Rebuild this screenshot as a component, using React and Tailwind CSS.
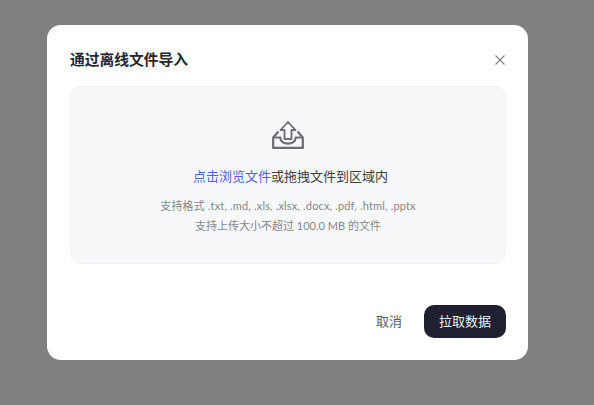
import React from "react";

const UploadIcon = () => (
  <svg width="34" height="30" viewBox="0 0 34 30" fill="none" stroke="#6b6d70" strokeWidth="2.2">
    <path d="M7.5 11.5 L2.2 17.5 V27.8 H31.8 V17.5 L26.5 11.5" />
    <path d="M2.2 17.5 H9 C10 22 13 23.6 17 23.6 C21 23.6 24 22 25 17.5 H31.8" />
    <path d="M17 2 L9.5 10 H13.5 V19 H20.5 V10 H24.5 Z" strokeWidth="1.8" strokeLinejoin="round" />
  </svg>
);

const App = () => {
  return (
    <div
      className="h-screen bg-[#808080] pl-[47px] pt-[25px] overflow-hidden"
      style={{ fontFamily: '"Lato", "Noto Sans CJK SC", sans-serif' }}
    >
      <div className="w-[481px] h-[335px] bg-white rounded-[14px] flex flex-col pl-[23px] pr-[22px] pt-[24px] pb-[22px]">
        <div className="flex items-center justify-between h-[21px]">
          <h2 className="text-[14.75px] font-bold text-[#25262d]">通过离线文件导入</h2>
          <button>
            <svg width="12" height="12" viewBox="0 0 12 12" fill="none" stroke="#808080" strokeWidth="1.2">
              <path d="M1.5 1.5 L10.5 10.5 M10.5 1.5 L1.5 10.5" />
            </svg>
          </button>
        </div>
        <div className="mt-[16px] h-[178px] w-[436px] bg-[#f7f8fa] border border-[#eef0f3] rounded-[12px] flex flex-col items-center pt-[33px]">
          <UploadIcon />
          <p className="mt-[16px] ml-[5px] text-[13px] leading-[20px] text-[#3a3c43]">
            <span className="text-[#4a62e8]">点击浏览文件</span>或拖拽文件到区域内
          </p>
          <p className="mt-[10px] text-[11px] leading-[20px] tracking-[0.16px] text-[#85878c]">
            支持格式 .txt, .md, .xls, .xlsx, .docx, .pdf, .html, .pptx
          </p>
          <p className="text-[11px] leading-[20px] text-[#85878c]">
            支持上传大小不超过 100.0 MB 的文件
          </p>
        </div>
        <div className="mt-auto flex items-center justify-end gap-[22px]">
          <button className="text-[13px] text-[#5a5c62]">取消</button>
          <button className="w-[82px] h-[33px] rounded-[10px] bg-[#1f2030] text-[#f2f2f4] text-[13px]">
            拉取数据
          </button>
        </div>
      </div>
    </div>
  );
};

export default App;
